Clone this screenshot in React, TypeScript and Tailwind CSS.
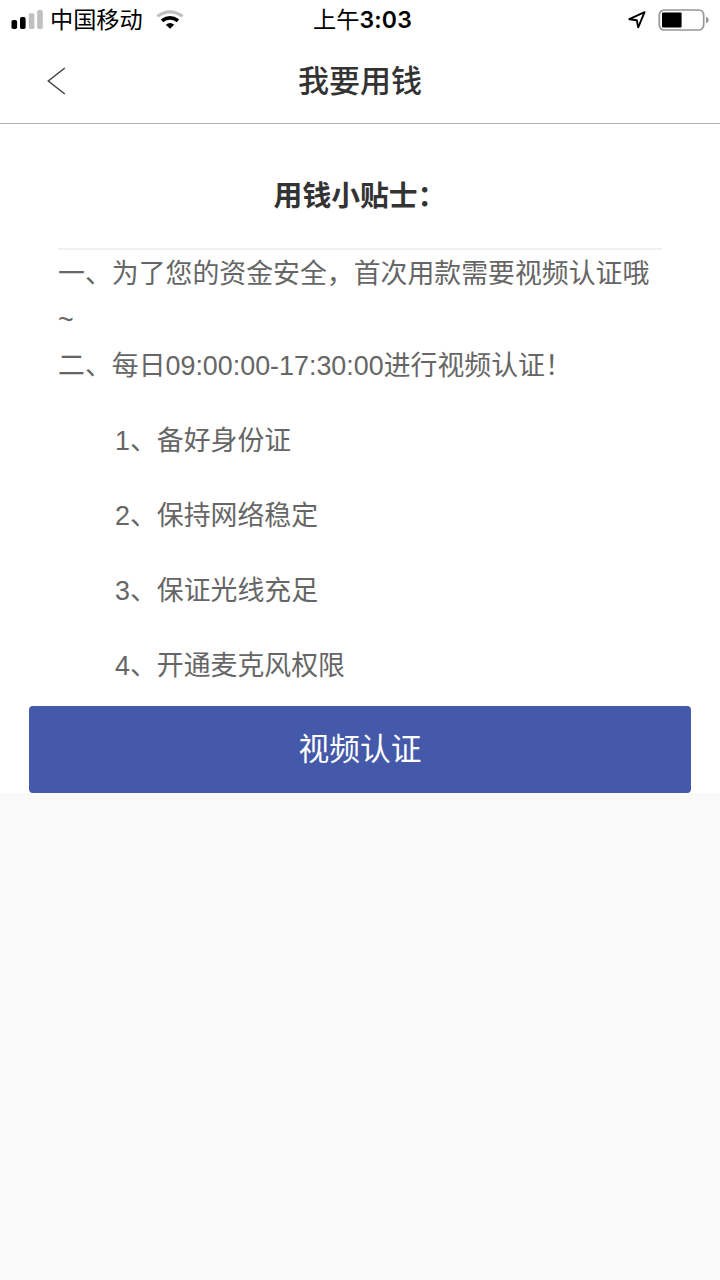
import { ReactNode } from 'react'

const STEPS = ['1、备好身份证', '2、保持网络稳定', '3、保证光线充足', '4、开通麦克风权限']

function SignalIcon(): ReactNode {
  return (
    <svg width="32" height="20" viewBox="0 0 32 20" className="block">
      <rect x="0.5" y="10" width="5.6" height="9" rx="1.8" fill="#000" />
      <rect x="9" y="7" width="5.6" height="12" rx="1.8" fill="#000" />
      <rect x="17.8" y="3.2" width="5.6" height="15.8" rx="1.8" fill="#c0c0c0" />
      <rect x="26.2" y="0" width="5.6" height="19" rx="1.8" fill="#c0c0c0" />
    </svg>
  )
}

function WifiIcon(): ReactNode {
  return (
    <svg width="28" height="20" viewBox="0 0 28 20" fill="none" className="block">
      <path d="M1.4 6.2Q14 -2.6 26.6 6.2" stroke="#c0c0c0" strokeWidth="3.2" />
      <path d="M6 10.8Q14 5 22 10.8" stroke="#000" strokeWidth="3.8" />
      <path d="M14 18.8L9.8 14.8Q14 11.2 18.2 14.8Z" fill="#000" />
    </svg>
  )
}

function LocationIcon(): ReactNode {
  return (
    <svg width="18" height="18" viewBox="0 0 18 18" fill="none" className="block">
      <path
        d="M16.6 1.2L1.3 8.2L8.8 9.2L10.2 16.4Z"
        stroke="#000"
        strokeWidth="1.9"
        strokeLinejoin="round"
      />
    </svg>
  )
}

function BatteryIcon(): ReactNode {
  return (
    <svg width="52" height="22" viewBox="0 0 52 22" fill="none" className="block">
      <rect x="1.3" y="1" width="44.4" height="20" rx="5" stroke="#979797" strokeWidth="1.7" />
      <rect x="4" y="3.5" width="19.6" height="15" rx="1" fill="#000" />
      <path d="M48 7.5Q50.8 8.6 50.8 11Q50.8 13.4 48 14.5Z" fill="#979797" />
    </svg>
  )
}

function StatusBar(): ReactNode {
  return (
    <div className="grid h-10 grid-cols-3 items-center pl-[11px] pr-[10px] text-black">
      <div className="flex items-center">
        <SignalIcon />
        <span className="ml-[7px] text-[23.2px] leading-10">中国移动</span>
        <span className="ml-[13px]">
          <WifiIcon />
        </span>
      </div>
      <div className="flex items-center justify-center pl-1 leading-10">
        <span className="text-[23.2px]">上午</span>
        <span className="font-['Inter'] text-[23px] font-semibold tracking-[0.2px]">3:03</span>
      </div>
      <div className="flex items-center justify-end">
        <LocationIcon />
        <span className="ml-3">
          <BatteryIcon />
        </span>
      </div>
    </div>
  )
}

function Header(): ReactNode {
  return (
    <header className="grid h-[84px] grid-cols-3 items-center border-b border-[#b2b2b2] px-[47px] pb-[2px]">
      <button type="button" aria-label="返回">
        <svg width="20" height="28" viewBox="0 0 20 28" fill="none" className="block">
          <path d="M17.8 1L1.3 14L17.8 27" stroke="#444" strokeWidth="1.5" />
        </svg>
      </button>
      <h1 className="pt-[2px] text-center text-[31px] font-medium leading-[46px] text-[#333]">我要用钱</h1>
    </header>
  )
}

export default function App(): ReactNode {
  return (
    <div className="min-h-screen bg-[#f9f9f9] font-['Liberation_Sans','Noto_Sans_CJK_SC',sans-serif]" lang="zh-CN">
      <div className="bg-white">
        <StatusBar />
        <Header />
        <main className="px-[29px]">
          <section className="px-[29px]">
            <h2 className="border-b-2 border-[#f0f0f0] pb-[28.5px] pt-[49px] text-center text-[28.8px] font-bold leading-[46px] text-[#333]">
              用钱小贴士：
            </h2>
            <div className="pt-[1.5px] text-[26.88px] leading-[46px] text-[#666]">
              <p>一、为了您的资金安全，首次用款需要视频认证哦~</p>
              <p>二、每日09:00:00-17:30:00进行视频认证！</p>
              <ol className="mt-[29px] flex flex-col gap-[29px] pl-[57px]">
                {STEPS.map((step) => (
                  <li key={step}>{step}</li>
                ))}
              </ol>
            </div>
          </section>
          <button
            type="button"
            className="mt-[17px] block h-[87px] w-[662px] rounded bg-[#4459a9] pt-[2px] text-center text-[30.72px] text-white"
          >
            视频认证
          </button>
        </main>
      </div>
    </div>
  )
}
